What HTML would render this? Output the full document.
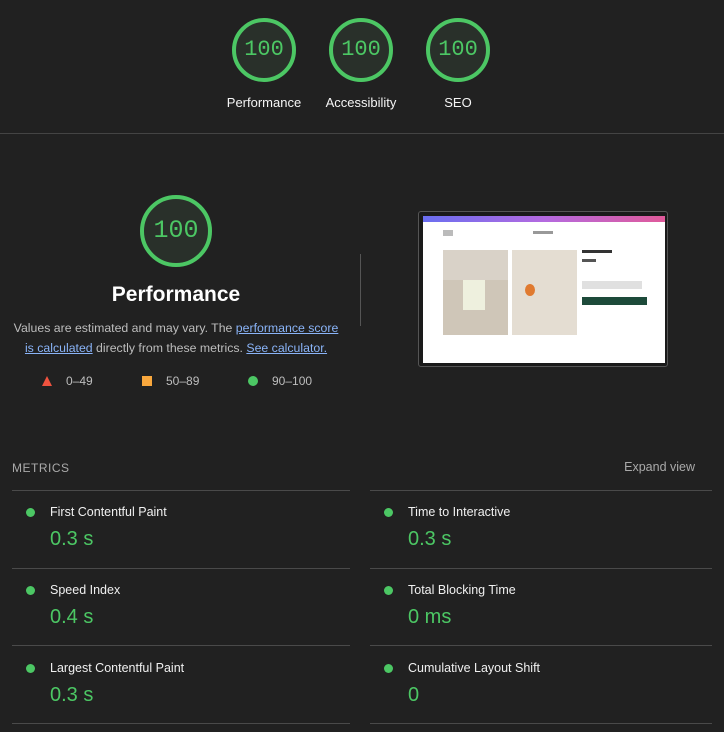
<!DOCTYPE html>
<html><head><style>
body{margin:0;width:724px;height:732px;background:#212121;font-family:"Liberation Sans",sans-serif;color:#fff;position:relative;overflow:hidden}
.a{position:absolute}
.g{position:absolute;border:4px solid #4cc764;border-radius:50%;background:#29302a;box-sizing:border-box;color:#4cc764;font-family:"Liberation Mono",monospace;text-align:center}
.lbl{position:absolute;font-size:13px;width:100px;text-align:center;color:#f5f5f5}
.line{position:absolute;height:1px;background:#4a4a4a}
.dot{position:absolute;width:9px;height:9px;border-radius:50%;background:#4cc764}
.mn{position:absolute;font-size:12.5px;color:#f0f0f0}
.mv{position:absolute;font-size:20px;color:#4cc764}
a{color:#8ab4f8;text-decoration:underline}
</style></head><body>
<div class="g" style="left:232px;top:18px;width:64px;height:64px;line-height:56px;font-size:22px">100</div>
<div class="g" style="left:329px;top:18px;width:64px;height:64px;line-height:56px;font-size:22px">100</div>
<div class="g" style="left:426px;top:18px;width:64px;height:64px;line-height:56px;font-size:22px">100</div>
<div class="lbl" style="left:214px;top:95px">Performance</div>
<div class="lbl" style="left:311px;top:95px">Accessibility</div>
<div class="lbl" style="left:408px;top:95px">SEO</div>
<div class="line" style="left:0;top:133px;width:724px;background:#444"></div>

<div class="g" style="left:140px;top:195px;width:72px;height:72px;line-height:64px;font-size:25px">100</div>
<div class="a" style="left:0;top:283px;width:352px;text-align:center;font-size:21px;font-weight:bold">Performance</div>
<div class="a" style="left:10px;top:318px;width:332px;text-align:center;font-size:12.3px;line-height:20px;color:#bdbdbd">Values are estimated and may vary. The <a>performance score is calculated</a> directly from these metrics. <a>See calculator.</a></div>
<svg class="a" style="left:42px;top:376px" width="10" height="10"><polygon points="5,0 10,10 0,10" fill="#f0533f"/></svg>
<div class="a" style="left:66px;top:374px;font-size:12px;color:#bdbdbd">0–49</div>
<div class="a" style="left:142px;top:376px;width:10px;height:10px;background:#f8a73d"></div>
<div class="a" style="left:166px;top:374px;font-size:12px;color:#bdbdbd">50–89</div>
<div class="a" style="left:248px;top:376px;width:10px;height:10px;border-radius:50%;background:#4cc764"></div>
<div class="a" style="left:272px;top:374px;font-size:12px;color:#bdbdbd">90–100</div>
<div class="a" style="left:360px;top:254px;width:1px;height:72px;background:#555"></div>

<div class="a" style="left:418px;top:211px;width:250px;height:156px;border:1px solid #555;border-radius:3px;background:#1a1a1a;box-sizing:border-box">
 <div class="a" style="left:4px;top:4px;width:242px;height:147px;background:#fff">
  <div class="a" style="left:0;top:0;width:242px;height:6px;background:linear-gradient(90deg,#6a6ef0,#b46ae0,#e05a9a)"></div>
  <div class="a" style="left:20px;top:14px;width:10px;height:6px;background:#bbb"></div>
  <div class="a" style="left:110px;top:15px;width:20px;height:3px;background:#999"></div>
  <div class="a" style="left:20px;top:34px;width:65px;height:85px;background:#d9d2c8"></div>
  <div class="a" style="left:20px;top:64px;width:65px;height:55px;background:#cfc6b8"></div>
  <div class="a" style="left:40px;top:64px;width:22px;height:30px;background:#eef0de"></div>
  <div class="a" style="left:89px;top:34px;width:65px;height:85px;background:#e4ddd2"></div>
  <div class="a" style="left:102px;top:68px;width:10px;height:12px;border-radius:50%;background:#e07a30"></div>
  <div class="a" style="left:159px;top:34px;width:30px;height:3px;background:#333"></div>
  <div class="a" style="left:159px;top:43px;width:14px;height:3px;background:#555"></div>
  <div class="a" style="left:159px;top:65px;width:60px;height:8px;background:#ccc;opacity:.6"></div>
  <div class="a" style="left:159px;top:81px;width:65px;height:8px;background:#1d4a3a"></div>
 </div>
</div>

<div class="a" style="left:12px;top:461px;font-size:12px;color:#aaa;letter-spacing:.5px">METRICS</div>
<div class="a" style="left:600px;top:460px;width:95px;text-align:right;font-size:12.5px;color:#aaa">Expand view</div>
<div class="line" style="left:12px;top:490px;width:338px"></div><div class="line" style="left:370px;top:490px;width:342px"></div>
<div class="line" style="left:12px;top:568px;width:338px"></div><div class="line" style="left:370px;top:568px;width:342px"></div>
<div class="line" style="left:12px;top:645px;width:338px"></div><div class="line" style="left:370px;top:645px;width:342px"></div>
<div class="line" style="left:12px;top:723px;width:338px"></div><div class="line" style="left:370px;top:723px;width:342px"></div>

<div class="dot" style="left:26px;top:508px"></div><div class="mn" style="left:50px;top:505px">First Contentful Paint</div><div class="mv" style="left:50px;top:528px">0.3 s</div>
<div class="dot" style="left:384px;top:508px"></div><div class="mn" style="left:408px;top:505px">Time to Interactive</div><div class="mv" style="left:408px;top:528px">0.3 s</div>
<div class="dot" style="left:26px;top:586px"></div><div class="mn" style="left:50px;top:583px">Speed Index</div><div class="mv" style="left:50px;top:606px">0.4 s</div>
<div class="dot" style="left:384px;top:586px"></div><div class="mn" style="left:408px;top:583px">Total Blocking Time</div><div class="mv" style="left:408px;top:606px">0 ms</div>
<div class="dot" style="left:26px;top:664px"></div><div class="mn" style="left:50px;top:661px">Largest Contentful Paint</div><div class="mv" style="left:50px;top:684px">0.3 s</div>
<div class="dot" style="left:384px;top:664px"></div><div class="mn" style="left:408px;top:661px">Cumulative Layout Shift</div><div class="mv" style="left:408px;top:684px">0</div>
</body></html>
